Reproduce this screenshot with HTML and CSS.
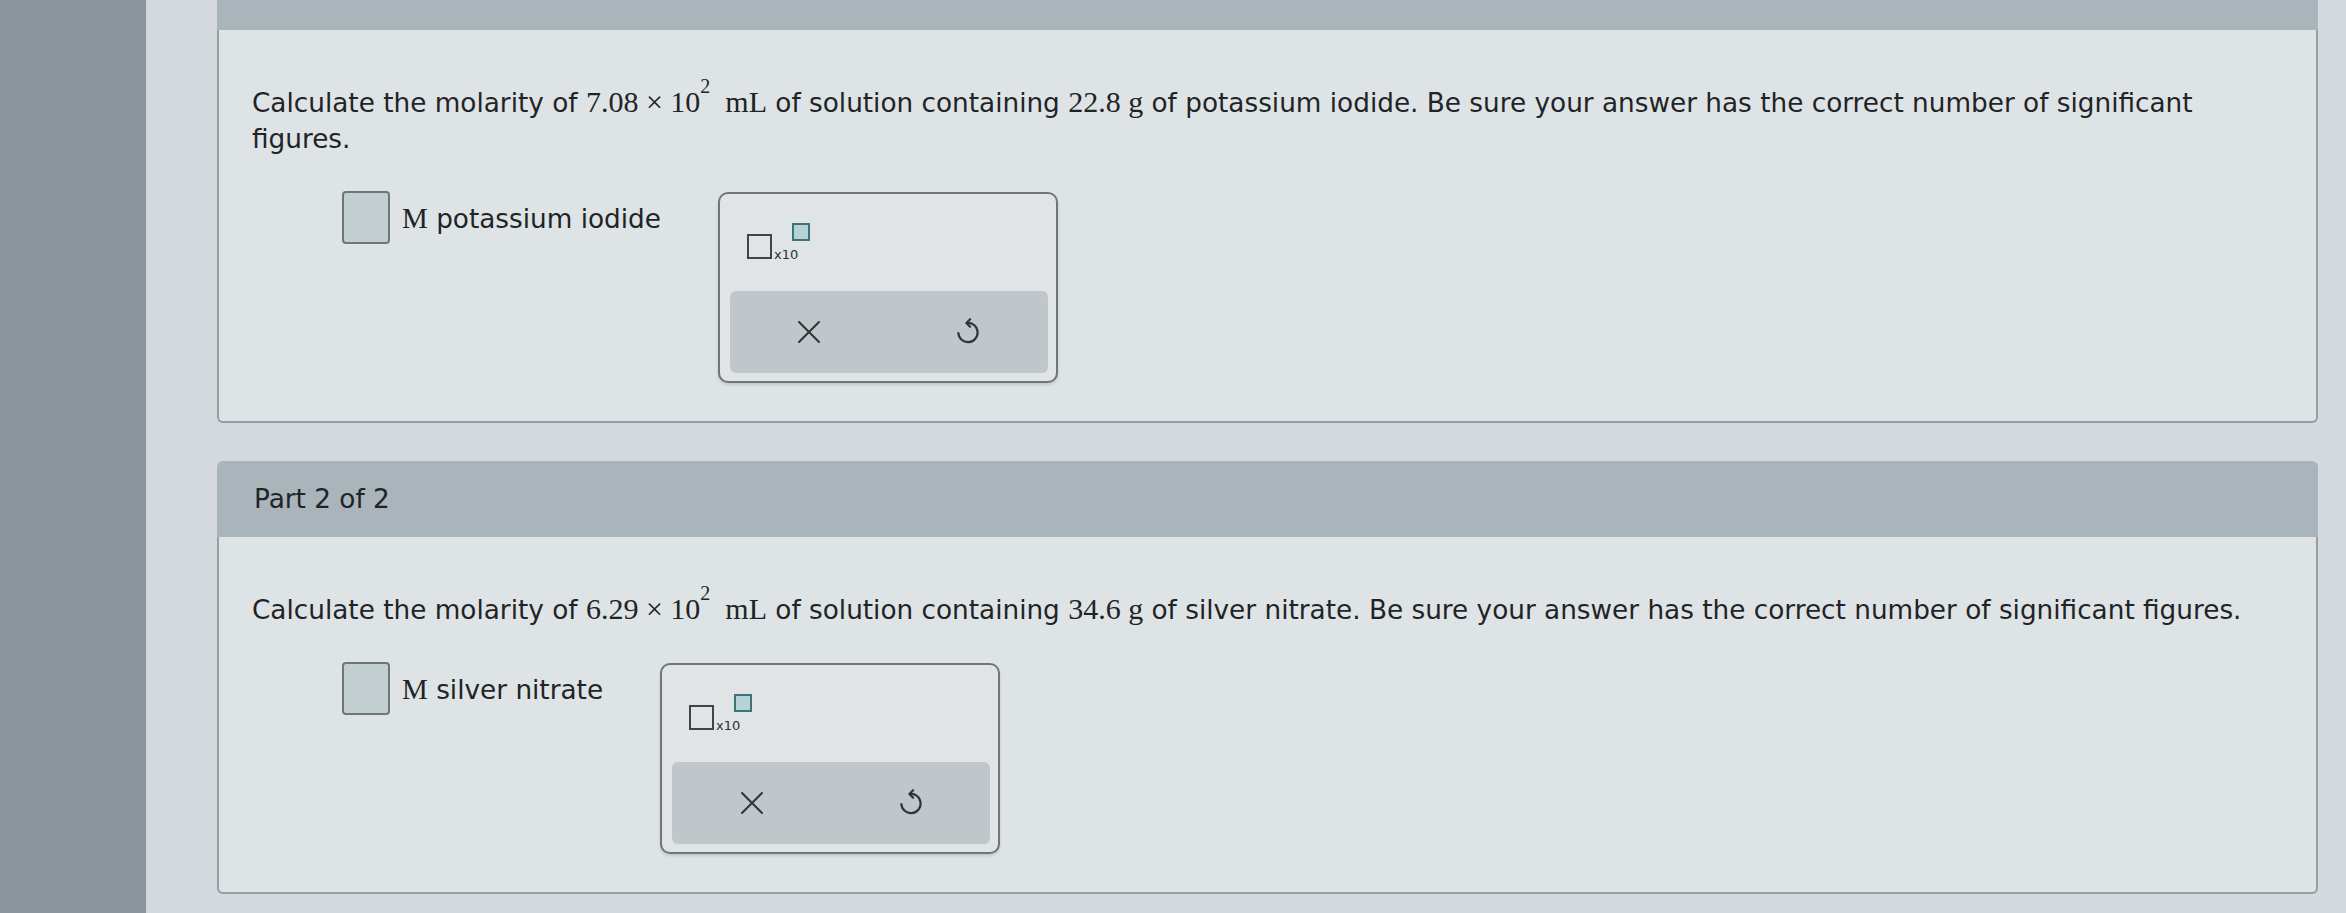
FILE: index.html
```html
<!DOCTYPE html>
<html lang="en">
<head>
  <meta charset="UTF-8">
  <title>Molarity</title>
  <link rel="stylesheet" href="styles.css">
</head>
<body>
  <div class="rail"></div>
  <div class="main">
    <section class="card">
      <div class="card-head cut"></div>
      <div class="card-body">
        <p class="question">Calculate the molarity of <span class="math">7.08 × 10<sup>2</sup>&nbsp; mL</span> of solution containing <span class="math">22.8 g</span> <span>of potassium iodide. Be sure your answer has the correct number of significant</span> <span>figures.</span></p>
        <div class="answer">
          <div class="blank"></div>
          <div class="unit"><span class="math">M</span> potassium iodide</div>
          <div class="tool">
            <div class="sci">
              <span class="sci-base"></span>
              <span class="sci-ten">x10</span>
              <span class="sci-exp"></span>
            </div>
            <div class="bar">
              <button class="bar-btn" title="Clear">
                <svg width="26" height="26" viewBox="0 0 26 26"><path d="M3 3 L23 23 M23 3 L3 23"/></svg>
              </button>
              <button class="bar-btn" title="Undo">
                <svg width="30" height="30" viewBox="0 0 28 28"><path d="M13 5.5 A9 9 0 1 1 5 15"/><path d="M16 2 L12.5 5.5 L16 9"/></svg>
              </button>
            </div>
          </div>
        </div>
      </div>
    </section>

    <section class="card">
      <div class="card-head">Part 2 of 2</div>
      <div class="card-body">
        <p class="question">Calculate the molarity of <span class="math">6.29 × 10<sup>2</sup>&nbsp; mL</span> of solution containing <span class="math">34.6 g</span> of silver nitrate. Be sure your answer has the correct number of significant figures.</p>
        <div class="answer">
          <div class="blank"></div>
          <div class="unit"><span class="math">M</span> silver nitrate</div>
          <div class="tool">
            <div class="sci">
              <span class="sci-base"></span>
              <span class="sci-ten">x10</span>
              <span class="sci-exp"></span>
            </div>
            <div class="bar">
              <button class="bar-btn" title="Clear">
                <svg width="26" height="26" viewBox="0 0 26 26"><path d="M3 3 L23 23 M23 3 L3 23"/></svg>
              </button>
              <button class="bar-btn" title="Undo">
                <svg width="30" height="30" viewBox="0 0 28 28"><path d="M13 5.5 A9 9 0 1 1 5 15"/><path d="M16 2 L12.5 5.5 L16 9"/></svg>
              </button>
            </div>
          </div>
        </div>
      </div>
    </section>
  </div>
</body>
</html>
```

FILE: styles.css
```css
body {
  margin: 0;
  font-family: "DejaVu Sans", Verdana, sans-serif;
  font-size: 26.3px;
  color: #1f2426;
  background-color: #d3d9dc;
  height: 100vh;
  display: flex;
  overflow: hidden;
}
.rail {
  width: 146px;
  background-color: #8a969b;
}
.main {
  flex: 1;
  padding: 0 28px 0 71px;
  display: flex;
  flex-direction: column;
  gap: 38px;
}
.card-head {
  height: 76px;
  line-height: 76px;
  padding-left: 37px;
  background-color: #a9b5ba;
  border-radius: 6px 6px 0 0;
}
.card-head.cut {
  height: 30px;
  border-radius: 0;
}
.card-body {
  background-color: #dee3e6;
  border: 2px solid #969fa3;
  border-top: none;
  border-radius: 0 0 6px 6px;
  padding: 54px 40px 38px 33px;
}
.question {
  margin: 0;
  line-height: 36px;
}
.math {
  font-family: "Liberation Serif", "Times New Roman", serif;
  font-size: 30px;
}
.math sup {
  font-size: 20px;
  line-height: 0;
  vertical-align: 19px;
}
.answer {
  display: flex;
  align-items: flex-start;
  margin-top: 34px;
  padding-left: 90px;
}
.blank {
  width: 44px;
  height: 49px;
  background-color: #c3ced1;
  border: 2px solid #6c7779;
  border-radius: 4px;
}
.unit {
  margin-left: 12px;
  margin-right: 57px;
  padding-top: 9px;
  line-height: 36px;
}
.unit .math {
  font-size: 29px;
}
.tool {
  box-sizing: border-box;
  width: 340px;
  height: 191px;
  margin-top: 1px;
  border: 2px solid #6f7678;
  border-radius: 10px;
  background-color: #e0e4e6;
  padding: 8px 8px 8px 10px;
  display: flex;
  flex-direction: column;
  box-shadow: 0 2px 3px rgba(0, 0, 0, 0.12);
}
.sci {
  flex: 1;
  display: flex;
  align-items: flex-start;
  padding: 21px 0 0 17px;
}
.sci-base {
  width: 21px;
  height: 21px;
  margin-top: 11px;
  border: 2px solid #3e4547;
}
.sci-ten {
  font-size: 13px;
  margin-top: 24px;
  margin-left: 2px;
  color: #2a3032;
}
.sci-exp {
  width: 14px;
  height: 14px;
  margin-left: -6px;
  background-color: #b7d2d5;
  border: 2px solid #3c7479;
}
.bar {
  height: 82px;
  display: flex;
  background-color: #bfc7ca;
  border-radius: 6px;
}
.bar-btn {
  flex: 1;
  background: none;
  border: none;
  padding: 0;
  display: flex;
  align-items: center;
  justify-content: center;
  cursor: pointer;
}
.bar-btn svg {
  fill: none;
  stroke: #2f3436;
  stroke-width: 2;
  stroke-linecap: round;
  stroke-linejoin: round;
}
```
